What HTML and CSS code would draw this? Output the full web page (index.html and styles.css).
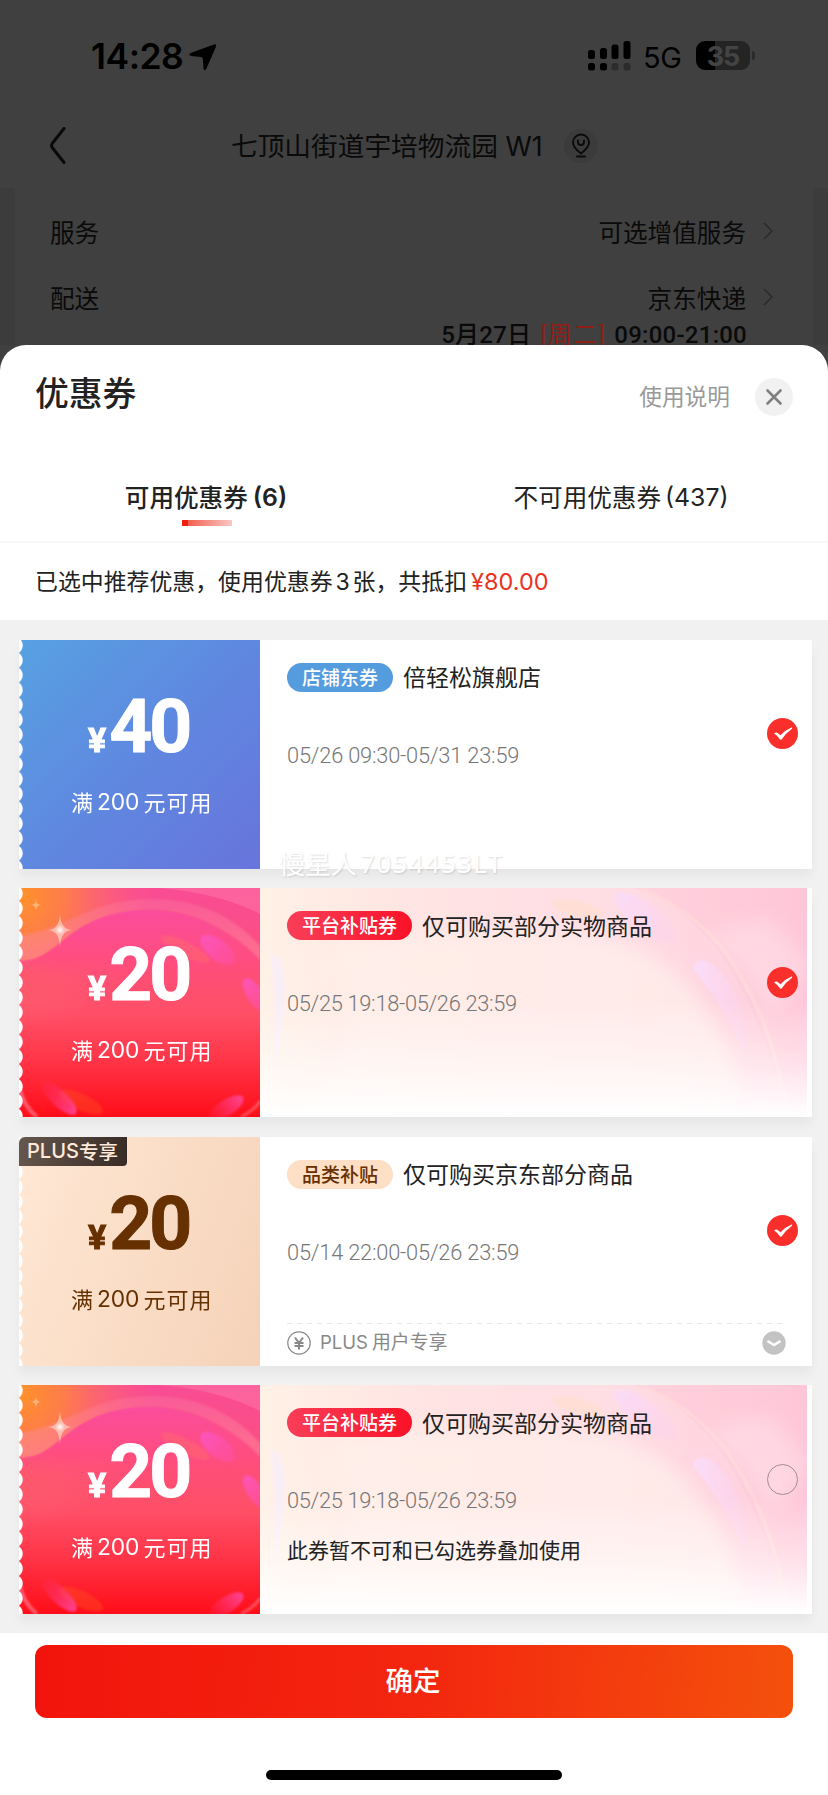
FILE: index.html
```html
<!DOCTYPE html>
<html lang="zh-CN">
<head>
<meta charset="utf-8">
<title>优惠券</title>
<link rel="stylesheet" href="styles.css">
</head>
<body>
<svg class="defs" width="0" height="0">
  <defs>
    <linearGradient id="redBase" x1="0" y1="0" x2="0" y2="1">
      <stop offset="0" stop-color="#f94c94"/><stop offset=".25" stop-color="#fb4e84"/><stop offset=".55" stop-color="#ff4f66"/><stop offset=".75" stop-color="#ff3548"/><stop offset="1" stop-color="#ff0d18"/>
    </linearGradient>
    <radialGradient id="orangeGlow" gradientUnits="userSpaceOnUse" cx="0" cy="8" r="135">
      <stop offset="0" stop-color="#ff9328"/><stop offset=".35" stop-color="#ff8440" stop-opacity=".85"/><stop offset="1" stop-color="#ff6080" stop-opacity="0"/>
    </radialGradient>
    <linearGradient id="innerDisc" x1="0" y1="0" x2="0" y2="1">
      <stop offset="0" stop-color="#fb4c9c"/><stop offset=".3" stop-color="#ff4d80"/><stop offset=".6" stop-color="#ff4f66" stop-opacity="0"/>
    </linearGradient>
    <linearGradient id="bandFade" x1="0" y1="0" x2="0" y2="1">
      <stop offset="0" stop-color="#ff8cac" stop-opacity=".25"/><stop offset="1" stop-color="#ff8c9c" stop-opacity=".55"/>
    </linearGradient>
    <linearGradient id="blob" x1="0" y1="0" x2="1" y2="0">
      <stop offset="0" stop-color="#fb56c4" stop-opacity=".85"/><stop offset="1" stop-color="#ff50a8" stop-opacity=".5"/>
    </linearGradient>
    <linearGradient id="blobLow" x1="0" y1="0" x2="1" y2="0">
      <stop offset="0" stop-color="#ff3070" stop-opacity=".1"/><stop offset="1" stop-color="#ff48a0" stop-opacity=".9"/>
    </linearGradient>
    <filter id="soft" x="-30%" y="-30%" width="160%" height="160%" color-interpolation-filters="sRGB"><feGaussianBlur stdDeviation="1.3"/></filter>
    <filter id="softer" x="-40%" y="-40%" width="180%" height="180%" color-interpolation-filters="sRGB"><feGaussianBlur stdDeviation="9"/></filter>
    <linearGradient id="paleBase" x1="0" y1="0" x2="1" y2="0">
      <stop offset="0" stop-color="#fff1e6"/><stop offset=".3" stop-color="#ffe4e3"/><stop offset=".65" stop-color="#ffdde4"/><stop offset="1" stop-color="#ffcadb"/>
    </linearGradient>
    <linearGradient id="whiteFade" x1="0" y1="0" x2="0" y2="1">
      <stop offset="0" stop-color="#fff" stop-opacity="0"/><stop offset=".5" stop-color="#fff" stop-opacity=".05"/><stop offset=".78" stop-color="#fff" stop-opacity=".5"/><stop offset="1" stop-color="#fff"/>
    </linearGradient>
    <linearGradient id="lilac" x1="0" y1="0" x2="1" y2="0">
      <stop offset="0" stop-color="#fadcfb"/><stop offset="1" stop-color="#fdd0ec" stop-opacity=".35"/>
    </linearGradient>

    <symbol id="artRed" viewBox="0 0 241 229" preserveAspectRatio="none">
      <rect width="241" height="229" fill="url(#redBase)"/>
      <rect width="241" height="229" fill="url(#orangeGlow)"/>
      <path d="M141 0Q200 5 241 26V0Z" fill="#ff7aa8" opacity=".5"/>
      <path d="M0 72C28 74 40 50 68 36C100 18 150 16 194 38C215 49 232 62 241 74V180H0Z" fill="url(#innerDisc)"/>
      <path d="M0 73C28 74 40 50 70 35C100 20 150 14 194 37C215 48 232 61 241 72V58C220 34 185 10 130 11C70 12 50 40 0 48Z" fill="url(#bandFade)" filter="url(#soft)"/>
      <ellipse cx="166" cy="61" rx="27" ry="7" fill="#ff6a70" opacity=".5" transform="rotate(27 166 61)" filter="url(#soft)"/>
      <ellipse cx="199" cy="62" rx="21" ry="10" fill="url(#blob)" transform="rotate(38 199 62)" filter="url(#soft)"/>
      <ellipse cx="236" cy="107" rx="19" ry="8" fill="url(#blob)" transform="rotate(58 236 107)" filter="url(#soft)"/>
      <ellipse cx="62" cy="214" rx="24" ry="8" fill="#ff5a20" opacity=".35" transform="rotate(25 62 214)" filter="url(#soft)"/>
      <ellipse cx="40" cy="210" rx="23" ry="8" fill="url(#blobLow)" transform="rotate(43 40 210)" filter="url(#soft)"/>
      <ellipse cx="207" cy="220" rx="20" ry="8" fill="url(#blobLow)" transform="rotate(-32 207 220)" filter="url(#soft)"/>
      <path d="M0 198Q4 218 18 229" fill="none" stroke="#ff8aa0" stroke-opacity=".6" stroke-width="4" filter="url(#soft)"/>
      <path d="M222 229Q236 222 241 213" fill="none" stroke="#ff7a80" stroke-opacity=".6" stroke-width="3" filter="url(#soft)"/>
      <path d="M41 25Q41.300 41.300 53 42Q41.300 42.700 41 60Q40.700 42.700 29 42Q40.700 41.300 41 25Z" fill="#ffe0d0" opacity=".6"/>
      <circle cx="41" cy="42" r="3" fill="#fff" opacity=".8" filter="url(#soft)"/>
      <path d="M17 11Q17.200 16.800 22 17Q17.200 17.200 17 23Q16.800 17.200 12 17Q16.800 16.800 17 11Z" fill="#ffe0c0" opacity=".5"/>
    </symbol>

    <symbol id="artPale" viewBox="0 0 547 229" preserveAspectRatio="none">
      <rect width="547" height="229" fill="url(#paleBase)"/>
      <path d="M70 60Q130 40 260 44Q380 40 430 100T480 229H40Q120 160 70 60Z" fill="#fff0ea" opacity=".7" filter="url(#softer)"/>
      <path d="M375 0C440 22 495 90 527 229H547V0Z" fill="#ffbcd0" opacity=".3"/>
      <path d="M440 50Q500 25 515 38Q540 60 547 80Q520 130 505 120Q480 65 440 50Z" fill="#ffe2ea" opacity=".5" filter="url(#softer)"/>
      <path d="M381 0C430 22 460 52 478 84C500 120 516 160 528 229" fill="none" stroke="#ffe4d8" stroke-opacity=".55" stroke-width="3" filter="url(#soft)"/>
      <ellipse cx="318" cy="21" rx="26" ry="8" fill="#ffe0cc" opacity=".6" transform="rotate(15 318 21)" filter="url(#soft)"/>
      <ellipse cx="386" cy="30" rx="38" ry="13" fill="url(#lilac)" opacity=".9" transform="rotate(38 386 30)" filter="url(#soft)"/>
      <path d="M434 82C432 72 445 68 457 80C477 98 487 128 488 164C478 160 470 124 434 82Z" fill="url(#lilac)" filter="url(#soft)"/>
      <path d="M10 66Q24 64 25 96T12 200Q18 120 10 66Z" fill="#f8ecff" opacity=".6" filter="url(#soft)"/>
      <rect width="547" height="229" fill="url(#whiteFade)"/>
    </symbol>

    <symbol id="tick" viewBox="0 0 31 31">
      <circle cx="15.500" cy="15.500" r="15.500" fill="#fa2f2c"/>
      <path d="M7 15.300Q9.500 14 11 15.200L13.500 17.300Q18.500 12 24.500 9.600Q25.600 9.500 25 10.700Q19 15 14.800 21.200Q13.700 22.300 12.700 21.100Q10.200 17.600 7 15.300Z" fill="#fff"/>
    </symbol>
  </defs>
</svg>

<div class="phone">
  <section class="backdrop">
    <header class="status">
      <div class="clock">14:28
        <svg width="28" height="28" viewBox="0 0 28 28"><path d="M25 1.500Q27.800 .2 27 3.500L17.500 25.500Q15.500 29 14.500 25.500L13.800 16Q13.600 14.300 12 14L2 13Q-1 12 1.500 10Z"/></svg>
      </div>
      <div class="radio">
        <svg width="43" height="30" viewBox="0 0 43 30">
          <rect x="0" y="9" width="7" height="9" rx="2.500"/><rect x="12" y="7" width="7" height="11" rx="2.500"/><rect x="23.500" y="3.500" width="7" height="14.500" rx="2.500"/><rect x="35.500" width="7" height="18" rx="2.500"/>
          <rect y="22" width="7" height="7.500" rx="2.500"/><rect x="12" y="22" width="7" height="7.500" rx="2.500"/>
          <rect class="dim" x="23.500" y="22" width="7" height="7.500" rx="2.500"/><rect class="dim" x="35.500" y="22" width="7" height="7.500" rx="2.500"/>
        </svg>
        <span class="net">5G</span>
        <div class="battery"><b>35</b></div><i class="nub"></i>
      </div>
    </header>
    <nav class="nav">
      <svg class="back" width="17" height="37" viewBox="0 0 17 37"><path d="M15 1.500L3.200 16.500Q1.800 18.500 3.200 20.500L15 35.500"/></svg>
      <span class="address">七顶山街道宇培物流园 W1</span>
      <svg class="pin" width="34" height="34" viewBox="0 0 34 34"><circle cx="17" cy="17" r="17" class="disc"/><path d="M17 24.500Q9 18.500 9 13.500A8 8 0 0 1 25 13.500Q25 18.500 17 24.500ZM14 11.500V13A3 3 0 0 0 20 13V11.500M13 27.500H21"/></svg>
    </nav>
    <div class="order">
      <div class="line"><span>服务</span><span class="val">可选增值服务<svg width="10" height="18" viewBox="0 0 10 18"><path d="M1 1L9 9L1 17"/></svg></span></div>
      <div class="line"><span>配送</span><span class="val">京东快递<svg width="10" height="18" viewBox="0 0 10 18"><path d="M1 1L9 9L1 17"/></svg></span></div>
      <div class="eta"><span>5月27日</span><em>[周二]</em><span class="hours">09:00-21:00</span></div>
    </div>
  </section>

  <main class="sheet">
    <div class="head">
      <h1>优惠券</h1>
      <div class="tools"><span>使用说明</span>
        <svg width="38" height="38" viewBox="0 0 38 38"><circle cx="19" cy="19" r="19" fill="#f1f1f1"/><path d="M12.500 12.500L25.500 25.500M25.500 12.500L12.500 25.500" stroke="#808080" stroke-width="2.600" stroke-linecap="round"/></svg>
      </div>
    </div>
    <div class="tabs">
      <div class="tab on"><span>可用优惠券</span><span class="count">(6)</span></div>
      <div class="tab off"><span>不可用优惠券</span><span class="count">(437)</span></div>
    </div>
    <div class="summary"><span>已选中推荐优惠，使用优惠券</span><span class="num">3</span><span>张，共抵扣</span><span class="sum">¥80.00</span></div>

    <div class="list">
      <div class="watermark">慢星人<span>7054453LT</span></div>

      <article class="card">
        <div class="face blue">
          <div class="price"><small>¥</small>40</div>
          <div class="rule">满<span>200</span>元可用</div>
        </div>
        <div class="info">
          <div class="title"><span class="tag tag-blue">店铺东券</span><span>倍轻松旗舰店</span></div>
          <div class="date">05/26 09:30-05/31 23:59</div>
        </div>
        <svg class="pick" width="31" height="31"><use href="#tick"/></svg>
      </article>

      <article class="card">
        <div class="face red"><svg class="art" width="241" height="229"><use href="#artRed"/></svg>
          <div class="price"><small>¥</small>20</div>
          <div class="rule">满<span>200</span>元可用</div>
        </div>
        <div class="info"><svg class="art" width="547" height="229"><use href="#artPale"/></svg>
          <div class="title"><span class="tag tag-red">平台补贴券</span><span>仅可购买部分实物商品</span></div>
          <div class="date narrow">05/25 19:18-05/26 23:59</div>
        </div>
        <svg class="pick" width="31" height="31"><use href="#tick"/></svg>
      </article>

      <article class="card">
        <div class="face gold">
          <div class="price"><small>¥</small>20</div>
          <div class="rule">满<span>200</span>元可用</div>
        </div>
        <div class="plus"><span>PLUS</span>专享</div>
        <div class="info">
          <div class="title"><span class="tag tag-gold">品类补贴</span><span>仅可购买京东部分商品</span></div>
          <div class="date">05/14 22:00-05/26 23:59</div>
          <div class="extra">
            <svg width="24" height="24" viewBox="0 0 24 24"><circle cx="12" cy="12" r="11.200"/><path d="M8 6.500L12 12L16 6.500M7.500 12H16.500M7.500 15H16.500M12 12V18.500" stroke-width="2"/></svg>
            <span class="latin">PLUS</span><span>用户专享</span>
            <svg class="more" width="24" height="24" viewBox="0 0 24 24"><circle cx="12" cy="12" r="11.700"/><path d="M5.500 10L12 14L18.500 10"/></svg>
          </div>
        </div>
        <svg class="pick" width="31" height="31"><use href="#tick"/></svg>
      </article>

      <article class="card">
        <div class="face red"><svg class="art" width="241" height="229"><use href="#artRed"/></svg>
          <div class="price"><small>¥</small>20</div>
          <div class="rule">满<span>200</span>元可用</div>
        </div>
        <div class="info"><svg class="art" width="547" height="229"><use href="#artPale"/></svg>
          <div class="title"><span class="tag tag-red">平台补贴券</span><span>仅可购买部分实物商品</span></div>
          <div class="date narrow">05/25 19:18-05/26 23:59</div>
          <div class="note">此券暂不可和已勾选券叠加使用</div>
        </div>
        <svg class="pick" width="31" height="31"><circle cx="15.500" cy="15.500" r="15" fill="none" stroke="#a58d94"/></svg>
      </article>
    </div>

    <div class="footer">
      <button class="ok">确定</button>
      <div class="home"></div>
    </div>
  </main>
</div>
</body>
</html>
```
FILE: styles.css
```css
* { box-sizing: border-box; }
body { margin: 0; background: #404040; font-family: "Noto Sans CJK SC", sans-serif; color: #222; }
.defs { position: absolute; }
.phone { width: 828px; height: 1795px; display: flex; flex-direction: column; overflow: hidden; }

/* dimmed page behind the sheet */
.backdrop { height: 345px; background: linear-gradient(#404040 188px, #3c3c3c 188px); color: #0a0a0a; flex: none; }
.status { height: 112px; padding: 0 73px 0 91px; display: flex; justify-content: space-between; }
.clock { display: flex; gap: 6px; padding-top: 36px; height: 80px; font: 600 35.500px/42px Inter, sans-serif; letter-spacing: -.5px; color: #000; white-space: nowrap; }
.clock svg { margin-top: 7px; }
.radio { display: flex; padding-top: 41px; }
.radio .dim { fill: #2c2c2c; }
.net { width: 51px; padding-left: 12px; font: 400 29px/33px Inter, sans-serif; letter-spacing: -.4px; color: #000; }
.battery { margin-left: 14px; width: 54px; height: 29px; border-radius: 9px; background: linear-gradient(90deg, #000 35%, #242424 35%); text-align: center; }
.battery b { font: 700 27px/31px Inter, sans-serif; color: #444; letter-spacing: -1px; }
.nub { width: 3px; height: 9px; margin: 10px 0 0 2px; border-radius: 0 4px 4px 0; background: #2a2a2a; }
.nav { height: 76px; padding-left: 49px; display: flex; align-items: flex-start; }
.nav path { fill: none; stroke: #0a0a0a; stroke-width: 3; stroke-linecap: round; }
.back { margin-top: 15px; }
.address { margin-left: 165px; width: 333px; font: 400 26.700px/36px Inter, "Noto Sans CJK SC", sans-serif; padding-top: 16px; white-space: nowrap; }
.nav .pin path { stroke-width: 1.900; }
.pin { margin: 17px 0 0 0; }
.pin .disc { fill: #3b3b3b; }
.order { height: 157px; margin: 0 15px; padding: 0 40px 0 35px; background: #404040; }
.line { display: flex; justify-content: space-between; height: 66px; font-size: 24.600px; line-height: 36px; }
.line > span { padding-top: 25px; }
.val { display: flex; gap: 17px; }
.val svg { margin-top: 9px; fill: none; stroke: #2a2a2a; stroke-width: 1.500; }
.eta { height: 25px; display: flex; justify-content: flex-end; padding-right: 26px; font: 500 24px/25px Roboto, "Noto Sans CJK SC", sans-serif; letter-spacing: .25px; white-space: nowrap; }
.eta span, .eta em { padding-top: 3px; }
.eta em { margin: 0 8px 0 9px; color: #8d1f16; font-style: normal; font-weight: 400; letter-spacing: 1.300px; }

/* sheet */
.sheet { position: relative; flex: 1; background: #fff; border-radius: 26px 26px 0 0; display: flex; flex-direction: column; }
.head { height: 112px; padding: 29px 35px 0; display: flex; justify-content: space-between; }
h1 { margin: 0; font-size: 33.800px; line-height: 36px; font-weight: 500; }
.tools { display: flex; gap: 25px; padding-top: 4px; font-size: 22.700px; line-height: 35px; color: #999; }
.tabs { height: 86px; border-bottom: 2px solid #f7f7f7; display: grid; grid-template-columns: 1fr 1fr; }
.tab { display: flex; justify-content: center; align-items: flex-start; gap: 5px; font-size: 24.600px; line-height: 36px; padding-top: 21px; padding-right: 2px; position: relative; }
.tab.off { gap: 4px; padding-right: 0; }
.tab .count { font-family: Inter, sans-serif; font-size: 24.800px; line-height: 38px; }
.on { font-weight: 500; }
.on .count { font-weight: 600; }
.on::after { content: ""; position: absolute; left: 182px; top: 63px; width: 50px; height: 6px; background: linear-gradient(90deg, #ee2010 6px, #f2604f 6px, #f9c8c4); }
.summary { height: 77px; padding: 19px 35px; display: flex; font-size: 22.900px; line-height: 36px; white-space: nowrap; }
.summary .num { font: 400 23px/40px Inter, sans-serif; width: 20px; text-align: center; }
.summary .sum { font: 400 23.500px/40px Inter, sans-serif; letter-spacing: 0; color: #e93323; margin-left: 4px; }

.list { position: relative; height: 1013px; background: #f1f1f1; padding: 19.500px 16px 0 19px; display: flex; flex-direction: column; gap: 19.500px; }
.watermark { position: absolute; left: 279px; top: 225px; z-index: 2; font-size: 26px; line-height: 36px; color: #fff; text-shadow: 1px 1px 2px rgba(0,0,0,.14); display: flex; }
.watermark span { font-family: "Noto Sans", sans-serif; font-size: 26px; letter-spacing: 1.300px; margin-left: 3px; }
.card { position: relative; flex: none; height: 229px; background: #fff; display: flex; box-shadow: 0 8px 10px rgba(0,0,0,.045); }
.face { position: relative; width: 241px; text-align: center; color: #fff; -webkit-mask: radial-gradient(circle at -5px 50%, transparent 8.200px, #000 9.200px) 0 -2px / 100% 14.850px; mask: radial-gradient(circle at -5px 50%, transparent 8.200px, #000 9.200px) 0 -2px / 100% 14.850px; }
.blue { background: linear-gradient(135deg, #57a1e2, #5f88e0 50%, #6874dc); }
.gold { background: linear-gradient(110deg, #ffe8d5, #f5d2b8); color: #663000; }
.art { position: absolute; left: 0; top: 0; }
.price { position: relative; height: 138px; padding: 41px 0 0 69px; text-align: left; font: 700 75px/90px Roboto, sans-serif; letter-spacing: -3px; white-space: nowrap; -webkit-text-stroke: 1px; }
.price small { font-size: 34px; letter-spacing: 0; margin-right: 3px; }
.rule { position: relative; padding-left: 52px; display: flex; font-size: 22px; letter-spacing: 1px; line-height: 46px; }
.rule span { font-family: Inter, sans-serif; font-size: 22.800px; line-height: 48px; margin: 0 4px 0 3px; letter-spacing: -.1px; }
.info { position: relative; flex: 1; padding: 23px 26px 0 27px; }
.title { position: relative; display: flex; align-items: center; height: 29px; gap: 10px; font-size: 23px; line-height: 27px; color: #222; white-space: nowrap; }
.title span:last-child { margin-top: -1px; }
.tag { height: 29px; padding: 0 15px; border-radius: 15px; font-size: 19px; font-weight: 500; line-height: 28px; color: #fff; }
.tag-blue { background: #559cdf; }
.tag-red { background: linear-gradient(90deg, #f93e58, #f91228); }
.tag-gold { background: #fddfc6; color: #663000; }
.date { position: relative; margin-top: 49px; font: 300 21.800px/30px Roboto, sans-serif; letter-spacing: -.2px; color: #777; }
.date.narrow { letter-spacing: -.3px; }
.note { position: relative; margin-top: 18px; font-size: 21px; line-height: 30px; white-space: nowrap; }
.pick { position: absolute; left: 748px; top: 78.500px; }
.plus { position: absolute; left: 0; top: 0; width: 108px; height: 29px; padding-left: 8px; display: flex; border-radius: 6px 0 4px 0; background: linear-gradient(100deg, #66584e, #382b25); color: #ffead9; font-size: 19.500px; font-weight: 500; line-height: 27px; }
.plus span { font-family: Inter, sans-serif; font-size: 20px; line-height: 29px; }
.extra { margin-top: 55px; height: 42px; padding-top: 8px; display: flex; font-size: 18.900px; line-height: 20px; color: #888; background: repeating-linear-gradient(90deg, #e6e6e6 0 5px, transparent 5px 10px) 0 0 / 100% 1px no-repeat; }
.extra svg { fill: none; stroke: #888; stroke-width: 1.200; }
.extra .latin { font-family: Inter, sans-serif; font-size: 18.500px; margin: 1px 4px 0 9px; }
.extra .more { margin-left: auto; fill: #c3c3c3; stroke: none; }
.extra .more path { fill: none; stroke: #fff; stroke-width: 2.400; }

.footer { flex: 1; padding: 12px 35px 0; display: flex; flex-direction: column; align-items: center; }
.ok { width: 758px; height: 73px; border: 0; border-radius: 12px; background: linear-gradient(95deg, #f2140c, #f3260f 50%, #f4510c); color: #fff; font: 500 27.500px/69px "Noto Sans CJK SC", sans-serif; padding: 0 2px 4px 0; }
.home { margin-top: 52px; width: 296px; height: 10px; border-radius: 5px; background: #000; }
```
